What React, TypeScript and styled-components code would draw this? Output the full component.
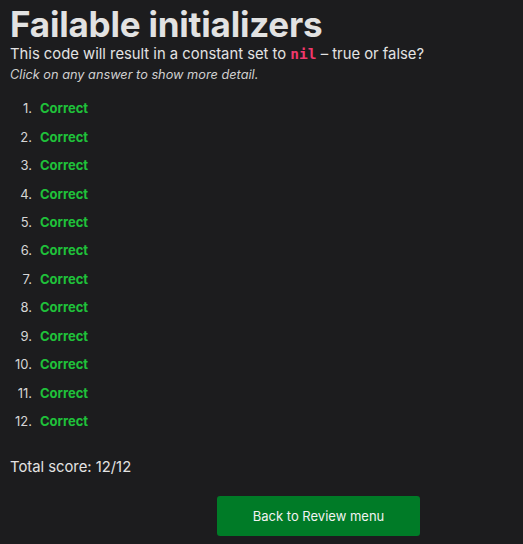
import React from 'react'
import styled, { createGlobalStyle } from 'styled-components'

const GlobalStyle = createGlobalStyle`
  html, body {
    margin: 0;
    padding: 0;
    background: #1c1c1e;
  }
  body {
    font-family: Inter, 'Liberation Sans', sans-serif;
    color: #e3e3e3;
  }
`

const results = Array.from({ length: 12 }, (_, i) => ({ id: i + 1, correct: true }))

export default function App() {
  return (
    <>
      <GlobalStyle />
      <Page>
        <Title>Failable initializers</Title>
        <Question>
          This code will result in a constant set to <Code>nil</Code> – true or false?
        </Question>
        <Hint>Click on any answer to show more detail.</Hint>
        <ResultList>
          {results.map((r) => (
            <ResultRow key={r.id}>
              <Num>{r.id}.</Num>
              <Verdict $correct={r.correct}>{r.correct ? 'Correct' : 'Wrong'}</Verdict>
            </ResultRow>
          ))}
        </ResultList>
        <Score>Total score: 12/12</Score>
        <Actions>
          <BackButton>Back to Review menu</BackButton>
        </Actions>
      </Page>
    </>
  )
}

const Page = styled.div`
  padding: 4px 10px 0 10px;
  height: 544px;
  box-sizing: border-box;
`
const Title = styled.h1`
  margin: 0;
  font-size: 35px;
  font-weight: 700;
  line-height: 40px;
  color: #e2e2e2;
  letter-spacing: -0.2px;
`
const Question = styled.p`
  margin: 0;
  font-size: 14.8px;
  line-height: 20px;
`
const Code = styled.code`
  font-family: 'DejaVu Sans Mono', 'Liberation Mono', monospace;
  font-weight: 700;
  font-size: 14.5px;
  color: #f0386b;
`
const Hint = styled.p`
  margin: 2px 0 0 0;
  font-size: 12.75px;
  font-style: italic;
  line-height: 18px;
  color: #d0d0d0;
`
const ResultList = styled.ol`
  list-style: none;
  margin: 10px 0 0 0;
  padding: 0;
  display: flex;
  flex-direction: column;
`
const ResultRow = styled.li`
  display: flex;
  align-items: center;
  height: 28.45px;
  font-size: 13px;
`
const Num = styled.span`
  width: 22px;
  text-align: right;
  margin-right: 8px;
  color: #d6d6d6;
`
const Verdict = styled.span<{ $correct: boolean }>`
  font-weight: 700;
  color: ${(p) => (p.$correct ? '#1fc13a' : '#e0383e')};
`
const Score = styled.div`
  margin-top: 22px;
  font-size: 14.8px;
  line-height: 20px;
`
const Actions = styled.div`
  display: flex;
  padding-left: 207px;
  margin-top: 19px;
`
const BackButton = styled.button`
  width: 203px;
  height: 40px;
  border: none;
  border-radius: 3px;
  background: #007b27;
  color: #f2f2f2;
  font-family: Inter, 'Liberation Sans', sans-serif;
  font-size: 13px;
  cursor: pointer;
`
